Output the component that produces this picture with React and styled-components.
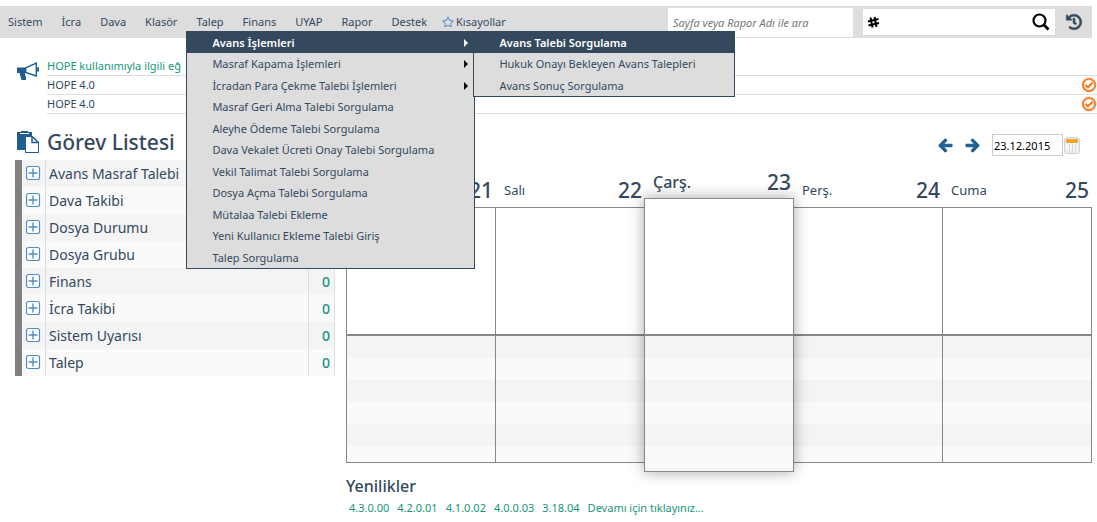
import React from "react";
import styled, { createGlobalStyle, ThemeProvider } from "styled-components";
import { FaArrowLeft, FaArrowRight, FaHistory, FaRegCheckCircle, FaRegStar } from "react-icons/fa";

const theme = {
  ink: "#34495e",
  link: "#16967a",
  blue: "#1f5f8f",
  bar: "#dddddd",
  line: "#888888",
  orange: "#fb6f10",
  light: "#fafafa",
  shade: "#f4f4f4",
};

const GlobalStyle = createGlobalStyle`
  *, *::before, *::after { box-sizing: border-box; }
  body {
    margin: 0;
    background: #fff;
    color: ${theme.ink};
    font: 11px/16px "Noto Sans", "Open Sans", sans-serif;
  }
  button, input { font: inherit; color: inherit; }
  ul { list-style: none; margin: 0; padding: 0; }
  svg { display: block; }
`;

const Page = styled.div`
  padding-top: 6px;
`;

const IconButton = styled.button`
  display: flex;
  align-items: center;
  justify-content: center;
  flex: none;
  padding: 0;
  border: 0;
  background: none;
  color: ${(p) => p.$color || p.theme.ink};
  cursor: pointer;
  svg { overflow: visible; }
`;

/* Top bar */
const TopBar = styled.header`
  display: flex;
  align-items: center;
  height: 32px;
  margin-right: 5px;
  background: ${(p) => p.theme.bar};
`;

const MainMenu = styled.ul`
  display: flex;
  flex: 1;
  gap: 1px;
`;

const MainItem = styled.li`
  position: relative;
  padding-left: ${(p) => (p.$starred ? 4 : 8)}px;
  padding-right: 10px;
`;

const MenuLink = styled.a`
  display: flex;
  align-items: center;
  gap: 2px;
  line-height: 32px;
  white-space: nowrap;
  color: inherit;
  text-decoration: none;
`;

const StarIcon = styled(FaRegStar)`
  color: #5f92cc;
`;

const Dropdown = styled.ul`
  position: absolute;
  top: 25px;
  left: -2px;
  z-index: 10;
  width: 289px;
  border: 1px solid ${(p) => p.theme.ink};
  background: ${(p) => p.theme.bar};
`;

const Submenu = styled(Dropdown)`
  top: -1px;
  left: 286px;
  width: 262px;
`;

const DropItem = styled.li`
  position: relative;
  height: 21px;
  &:nth-child(even) { height: 22px; }
`;

const DropLink = styled.a`
  display: flex;
  align-items: center;
  justify-content: space-between;
  height: 100%;
  padding: 0 6px 0 25px;
  white-space: nowrap;
  text-decoration: none;
  font-weight: ${(p) => (p.$active ? 600 : 400)};
  color: ${(p) => (p.$active ? "#fff" : p.theme.ink)};
  background: ${(p) => (p.$active ? p.theme.ink : "transparent")};
`;

const Caret = styled.span`
  border: 4px solid transparent;
  border-left-color: ${(p) => (p.$active ? "#fff" : "#000")};
  border-right-width: 0;
`;

const PageSearch = styled.input`
  width: 185px;
  height: 29px;
  padding: 0 5px;
  border: 0;
  background: #fff;
  outline: 0;
  &::placeholder { color: #777; font-style: italic; opacity: 1; }
`;

const TagSearch = styled.form`
  display: flex;
  align-items: center;
  width: 192px;
  height: 26px;
  margin: 0 11px 0 10px;
  padding: 0 5px 0 4px;
  background: #fff;
`;

const TagInput = styled.input`
  flex: 1;
  min-width: 0;
  border: 0;
  outline: 0;
  background: none;
`;

const HistorySlot = styled.div`
  display: flex;
  padding-right: 10px;
`;

/* Announcements */
const News = styled.section`
  display: flex;
  padding: 18px 0 0 17px;
`;

const NewsIcon = styled.div`
  width: 30px;
  padding-top: 6px;
`;

const NewsList = styled.ul`
  flex: 1;
  padding-top: 1px;
`;

const NewsRow = styled.li`
  display: flex;
  align-items: center;
  justify-content: space-between;
  height: 19px;
  padding-right: 1px;
  border-bottom: 1px solid ${(p) => p.theme.bar};
`;

const TextLink = styled.a`
  color: ${(p) => p.theme.link};
  text-decoration: none;
`;

/* Task list */
const Main = styled.main`
  display: flex;
  gap: 11px;
  padding: 0 5px 0 15px;
`;

const TaskPanel = styled.section`
  flex: none;
  width: 320px;
`;

const TaskHeading = styled.h1`
  display: flex;
  align-items: center;
  gap: 8px;
  height: 46px;
  margin: 0;
  padding: 10px 0 0 2px;
  font-size: 21px;
  line-height: 36px;
  font-weight: 500;
`;

const TaskTable = styled.table`
  width: 100%;
  border-collapse: separate;
  border-spacing: 0;
  border-left: 7px solid #808080;
  font-size: 14px;
  line-height: 26px;
  th, td { height: 27px; padding: 0; }
  tr:nth-child(odd) { background: ${(p) => p.theme.shade}; }
  tr:nth-child(even) { background: ${(p) => p.theme.light}; }
`;

const ExpandCell = styled.td`
  width: 24px;
  border-right: 1px solid ${(p) => p.theme.bar};
`;

const ExpandButton = styled(IconButton)`
  width: 100%;
  padding: 0 2px 2px 0;
`;

const NameCell = styled.th`
  && { padding-left: 3px; }
  text-align: left;
  font-weight: 400;
`;

const CountCell = styled.td`
  && { padding-right: 4px; }
  width: 27px;
  border: solid ${(p) => p.theme.bar};
  border-width: 0 1px;
  text-align: right;
  font-weight: 500;
  color: ${(p) => p.theme.link};
`;

/* Week calendar */
const CalendarPanel = styled.section`
  flex: 1;
  min-width: 0;
`;

const DateBar = styled.div`
  display: flex;
  align-items: center;
  justify-content: flex-end;
  height: 46px;
  padding: 16px 12px 0 0;
`;

const WeekNav = styled.div`
  display: flex;
  gap: 12px;
  margin-right: 12px;
  svg { stroke: currentColor; stroke-width: 36; }
`;

const DateInput = styled.input`
  width: 71px;
  height: 22px;
  margin-right: 1px;
  padding: 0 1px;
  border: 1px solid #ccc;
  color: #000;
  outline: 0;
`;

const Week = styled.div`
  display: grid;
  grid-template-columns: repeat(5, 1fr);
  align-items: start;
  height: 312px;
  margin-right: 1px;
`;

const Day = styled.article`
  position: relative;
  z-index: ${(p) => (p.$today ? 1 : 0)};
  margin-top: ${(p) => (p.$today ? 0 : 9)}px;
  margin-right: -1px;
`;

const DayHead = styled.h2`
  display: flex;
  align-items: center;
  justify-content: space-between;
  height: 38px;
  margin: 0;
  padding: ${(p) => (p.$today ? "6px 3px 0 9px" : "4px 3px 0 9px")};
  font-size: ${(p) => (p.$today ? 16 : 13)}px;
  font-weight: ${(p) => (p.$today ? 500 : 400)};
`;

const DayNumber = styled.span`
  margin-left: auto;
  font-size: 21px;
  font-weight: 500;
`;

const DayBox = styled.div`
  border: 1px solid ${(p) => p.theme.line};
  background: #fff;
  box-shadow: ${(p) => (p.$today ? "0 0 14px rgba(0, 0, 0, 0.35)" : "none")};
`;

const Morning = styled.div`
  height: ${(p) => (p.$today ? 135 : 126)}px;
`;

const Agenda = styled.div`
  height: ${(p) => (p.$today ? 137 : 128)}px;
  border-top: 2px solid ${(p) => p.theme.line};
  background: repeating-linear-gradient(
    ${(p) => p.theme.shade} 0 22px,
    ${(p) => p.theme.light} 22px 44px
  );
`;

const ReleaseHeading = styled.h2`
  margin: 0;
  font-size: 16px;
  line-height: 28px;
  font-weight: 500;
`;

const Releases = styled.nav`
  display: flex;
  gap: 8px;
  padding-left: 3px;
`;

const Megaphone = () => (
  <svg width="22" height="19" viewBox="0 0 22 19" aria-hidden="true">
    <path d="M0 5.500h9v5.500H8v2l1 2v3H4.500l-2-7H0z" fill={theme.blue} />
    <path d="M8.700 5.800 L19.300 1v13L8.700 10.500z" fill="#fff" stroke={theme.blue} strokeWidth="1.400" />
    <path d="M20.500 5.500q1.500 2 0 4" fill="none" stroke={theme.blue} strokeWidth="2" />
  </svg>
);

const Clipboard = () => (
  <svg width="22" height="22" viewBox="0 0 22 22" aria-hidden="true">
    <path d="M0 1h4V0h7v1h4v6H8v12H0z" fill={theme.blue} />
    <path d="M3 2h9v1H3z" fill="#fff" />
    <path d="M8.500 5.500h7l6 6v10h-13z" fill="#fff" stroke={theme.blue} />
    <path d="M15 5.500v6h6.500z" fill="#fff" stroke={theme.blue} strokeWidth="1.500" />
  </svg>
);

const HashIcon = () => (
  <svg width="13" height="13" viewBox="0 0 13 13" fill="none" stroke="#000" strokeWidth="2" aria-hidden="true">
    <path d="M3.500 1.500l2 10M7.500 1l2 10M1 5.500l10.500-2.500M1.500 9.500l10.500-2.500" />
  </svg>
);

const SearchIcon = () => (
  <svg width="18" height="18" viewBox="0 0 18 18" fill="none" stroke="#000" aria-hidden="true">
    <circle cx="7.500" cy="7.500" r="6" strokeWidth="2.200" />
    <path d="M11.800 11.800l4.700 4.700" strokeWidth="2.800" />
  </svg>
);

const PlusBox = () => (
  <svg width="14" height="14" viewBox="0 0 14 14" fill="none" stroke="#5090c8" aria-hidden="true">
    <rect x="0.500" y="0.500" width="13" height="13" rx="2" fill="#fff" strokeWidth="1.200" />
    <path d="M7 2.500v9M2.500 7h9" strokeWidth="1.400" />
  </svg>
);

const CalendarIcon = () => (
  <svg width="16" height="17" viewBox="0 0 16 17" aria-hidden="true">
    <rect x="0.500" y="0.500" width="15" height="16" rx="2" fill="#ebe9e6" stroke="#d5d5d5" />
    <rect x="2" y="2" width="12" height="12" fill="#f7f7f7" />
    <rect x="2" y="2" width="12" height="4" rx="1" fill="#f0a526" />
    <path d="M5.500 7v7M8.500 7v7M11.500 7v7" stroke="#d8d8d8" />
  </svg>
);

const mainBefore = ["Sistem", "İcra", "Dava", "Klasör"];
const mainAfter = ["Finans", "UYAP", "Rapor", "Destek"];

const requestMenu = [
  {
    label: "Avans İşlemleri",
    open: true,
    children: ["Avans Talebi Sorgulama", "Hukuk Onayı Bekleyen Avans Talepleri", "Avans Sonuç Sorgulama"],
  },
  { label: "Masraf Kapama İşlemleri", more: true },
  { label: "İcradan Para Çekme Talebi İşlemleri", more: true },
  { label: "Masraf Geri Alma Talebi Sorgulama" },
  { label: "Aleyhe Ödeme Talebi Sorgulama" },
  { label: "Dava Vekalet Ücreti Onay Talebi Sorgulama" },
  { label: "Vekil Talimat Talebi Sorgulama" },
  { label: "Dosya Açma Talebi Sorgulama" },
  { label: "Mütalaa Talebi Ekleme" },
  { label: "Yeni Kullanıcı Ekleme Talebi Giriş" },
  { label: "Talep Sorgulama" },
];

const tasks = [
  { name: "Avans Masraf Talebi" },
  { name: "Dava Takibi" },
  { name: "Dosya Durumu" },
  { name: "Dosya Grubu" },
  { name: "Finans", count: 0 },
  { name: "İcra Takibi", count: 0 },
  { name: "Sistem Uyarısı", count: 0 },
  { name: "Talep", count: 0 },
];

const days = [
  { date: 21 },
  { name: "Salı", date: 22 },
  { name: "Çarş.", date: 23, today: true },
  { name: "Perş.", date: 24 },
  { name: "Cuma", date: 25 },
];

const releases = ["4.3.0.00", "4.2.0.01", "4.1.0.02", "4.0.0.03", "3.18.04", "Devamı için tıklayınız..."];

const PlainItem = ({ label }) => (
  <MainItem>
    <MenuLink href="#">{label}</MenuLink>
  </MainItem>
);

const RequestMenu = () => (
  <Dropdown>
    {requestMenu.map((item) => (
      <DropItem key={item.label}>
        <DropLink href="#" $active={item.open}>
          {item.label}
          {(item.open || item.more) && <Caret $active={item.open} />}
        </DropLink>
        {item.open && (
          <Submenu>
            {item.children.map((label, i) => (
              <DropItem key={label}>
                <DropLink href="#" $active={i === 0}>{label}</DropLink>
              </DropItem>
            ))}
          </Submenu>
        )}
      </DropItem>
    ))}
  </Dropdown>
);

export default function App() {
  return (
    <ThemeProvider theme={theme}>
      <GlobalStyle />
      <Page>
        <TopBar>
          <MainMenu>
            {mainBefore.map((label) => <PlainItem key={label} label={label} />)}
            <MainItem>
              <MenuLink href="#">Talep</MenuLink>
              <RequestMenu />
            </MainItem>
            {mainAfter.map((label) => <PlainItem key={label} label={label} />)}
            <MainItem $starred>
              <MenuLink href="#"><StarIcon size={12} />Kısayollar</MenuLink>
            </MainItem>
          </MainMenu>
          <PageSearch aria-label="Sayfa veya Rapor Adı" placeholder="Sayfa veya Rapor Adı ile ara" />
          <TagSearch>
            <HashIcon />
            <TagInput aria-label="Numara ile ara" />
            <IconButton type="button" aria-label="Ara"><SearchIcon /></IconButton>
          </TagSearch>
          <HistorySlot>
            <IconButton type="button" aria-label="Geçmiş">
              <FaHistory size={16} stroke="currentColor" strokeWidth={16} />
            </IconButton>
          </HistorySlot>
        </TopBar>

        <News>
          <NewsIcon><Megaphone /></NewsIcon>
          <NewsList>
            <NewsRow><TextLink href="#">HOPE kullanımıyla ilgili eğ</TextLink></NewsRow>
            {[1, 2].map((n) => (
              <NewsRow key={n}>
                HOPE 4.0
                <IconButton type="button" aria-label="Okundu" $color={theme.orange}>
                  <FaRegCheckCircle size={14} stroke="currentColor" strokeWidth={24} />
                </IconButton>
              </NewsRow>
            ))}
          </NewsList>
        </News>

        <Main>
          <TaskPanel>
            <TaskHeading><Clipboard />Görev Listesi</TaskHeading>
            <TaskTable>
              <tbody>
                {tasks.map(({ name, count }) => (
                  <tr key={name}>
                    <ExpandCell>
                      <ExpandButton type="button" aria-label={`${name} aç`}><PlusBox /></ExpandButton>
                    </ExpandCell>
                    <NameCell scope="row">{name}</NameCell>
                    <CountCell>{count}</CountCell>
                  </tr>
                ))}
              </tbody>
            </TaskTable>
          </TaskPanel>

          <CalendarPanel>
            <DateBar>
              <WeekNav>
                <IconButton type="button" aria-label="Önceki hafta" $color={theme.blue}><FaArrowLeft size={15} /></IconButton>
                <IconButton type="button" aria-label="Sonraki hafta" $color={theme.blue}><FaArrowRight size={15} /></IconButton>
              </WeekNav>
              <DateInput aria-label="Tarih" defaultValue="23.12.2015" />
              <IconButton type="button" aria-label="Takvim"><CalendarIcon /></IconButton>
            </DateBar>
            <Week>
              {days.map((day) => (
                <Day key={day.date} $today={day.today}>
                  <DayHead $today={day.today}>
                    {day.name}
                    <DayNumber>{day.date}</DayNumber>
                  </DayHead>
                  <DayBox $today={day.today}>
                    <Morning $today={day.today} />
                    <Agenda $today={day.today} />
                  </DayBox>
                </Day>
              ))}
            </Week>
            <ReleaseHeading>Yenilikler</ReleaseHeading>
            <Releases>
              {releases.map((label) => <TextLink key={label} href="#">{label}</TextLink>)}
            </Releases>
          </CalendarPanel>
        </Main>
      </Page>
    </ThemeProvider>
  );
}
